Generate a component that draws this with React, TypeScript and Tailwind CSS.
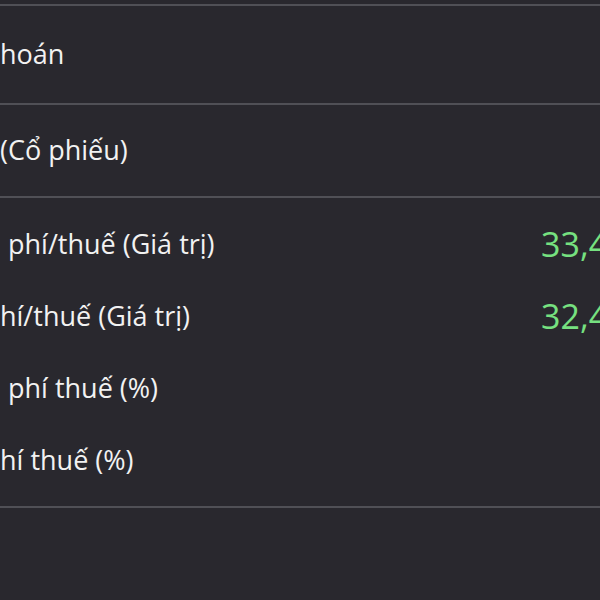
const Divider = () => <div className="h-[2px] w-full bg-[#505056]" />;

interface RowProps {
  label: string;
  value?: string;
  indent?: string;
}

const FeeRow = ({ label, value, indent }: RowProps) => (
  <div className="flex h-[72px] items-center">
    <div className={`w-[541px] shrink-0 text-[27px] text-[#f2f2f2] ${indent ?? ""}`}>{label}</div>
    {value && (
      <div className="shrink-0 whitespace-nowrap text-[34px] text-[#76e180]">{value}</div>
    )}
  </div>
);

export default function App() {
  return (
    <div
      className="h-[600px] w-[600px] overflow-hidden bg-[#29282e]"
      style={{ fontFamily: '"Open Sans", "Noto Sans", sans-serif' }}
    >
      <div className="h-[4px]" />
      <Divider />

      {/* Account */}
      <div className="flex h-[97px] items-center text-[27px] text-[#f2f2f2]">hoán</div>
      <Divider />

      {/* Ticker */}
      <div className="flex h-[91px] items-center text-[27px] text-[#f2f2f2]">(Cổ phiếu)</div>
      <Divider />

      {/* Profit / loss */}
      <div className="flex flex-col py-[10px]">
        <FeeRow label="phí/thuế (Giá trị)" value="33,412,500" indent="pl-[8px]" />
        <FeeRow label="hí/thuế (Giá trị)" value="32,418,750" />
        <FeeRow label="phí thuế (%)" indent="pl-[8px]" />
        <FeeRow label="hí thuế (%)" />
      </div>
      <Divider />
    </div>
  );
}
